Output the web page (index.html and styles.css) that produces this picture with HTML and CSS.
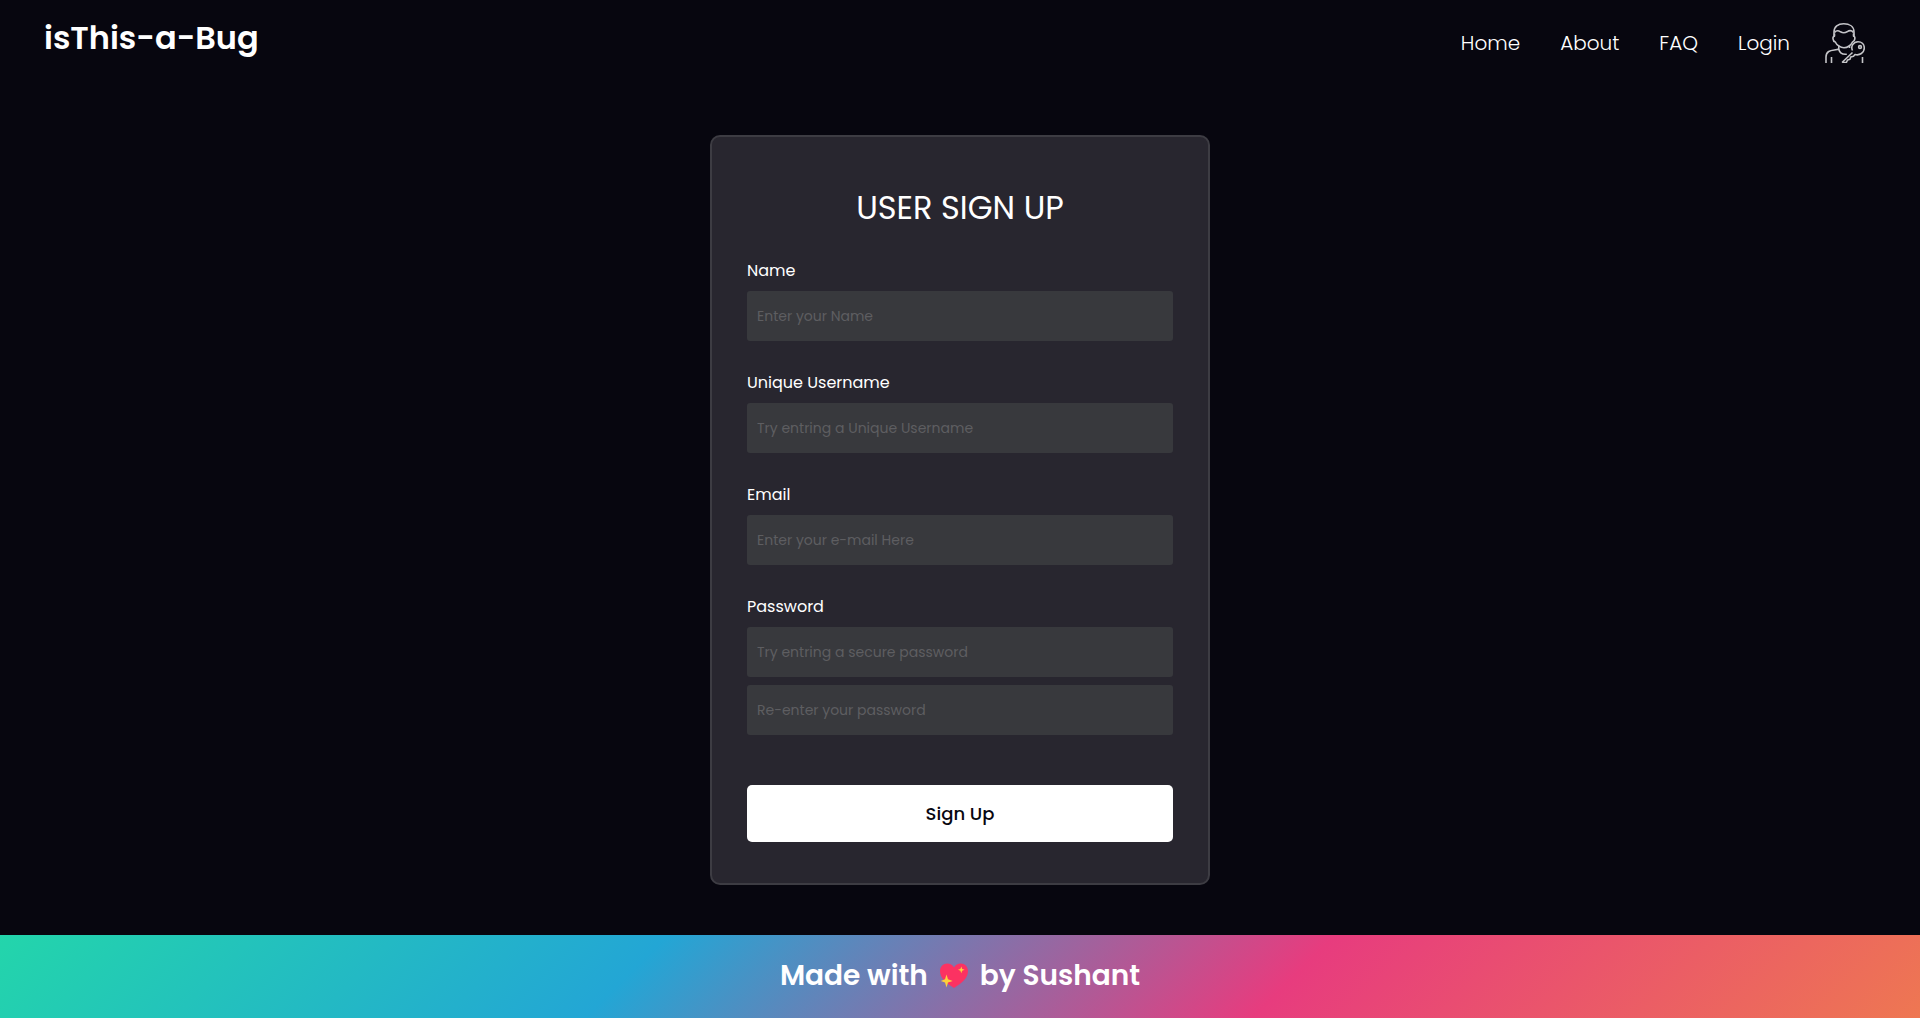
FILE: index.html
```html
<!DOCTYPE html>
<html lang="en">
<head>
<meta charset="utf-8">
<meta name="viewport" content="width=device-width, initial-scale=1">
<title>isThis-a-Bug | Sign Up</title>
<link rel="stylesheet" href="styles.css">
</head>
<body>
<header class="header">
  <a class="logo" href="#">isThis-a-Bug</a>
  <nav class="nav">
    <a href="#">Home</a>
    <a href="#">About</a>
    <a href="#">FAQ</a>
    <a href="#">Login</a>
    <a class="avatar" href="#" aria-label="Account">
      <svg viewBox="0 0 40 40" width="40" height="40" fill="none" stroke="#c4c4c8" stroke-width="1.6" stroke-linejoin="round">
        <path d="M9 14V9C9 3.500 13 .8 18.700 .8S29 3.500 29 9v5"/>
        <path d="M9.500 9.500c2-2.500 4-2 6-.7 2 1.200 4.500 1.200 6.500 0 2-1.300 4.500-1.800 6.500.7"/>
        <path d="M9.500 10.500V13c-2.300.5-2 5.300.8 6 1.200 2.800 5 5.700 8.700 5.700 3.600 0 7.200-2.700 8.500-5.700 2.800-.8 3.100-5.500 1-6v-2.500"/>
        <path d="M13.800 22.500V26C10 28 1 25.500 1 34v6M6.500 34v6M13.800 26.500c1 3.500 4 5.200 8 4.700M24.500 22.500V25M37.500 34v6"/>
        <path d="M27.500 29.500 17.500 39c1.200.8 2.700.8 4 .3l1-2.300 2.500-.7.7-2.300 2.800-.8 1.500-1.700c4.500 1.300 9.300-1.700 9.300-6.500 0-4-3-6.300-6.300-6.300-4.800 0-7.500 5-5.500 8.800"/>
        <circle cx="35" cy="24" r="1.400"/>
      </svg>
    </a>
  </nav>
</header>
<main class="main">
  <form class="card">
    <h1 class="title">USER SIGN UP</h1>
    <div class="field">
      <label for="name">Name</label>
      <input id="name" type="text" placeholder="Enter your Name">
    </div>
    <div class="field">
      <label for="username">Unique Username</label>
      <input id="username" type="text" placeholder="Try entring a Unique Username">
    </div>
    <div class="field">
      <label for="email">Email</label>
      <input id="email" type="email" placeholder="Enter your e-mail Here">
    </div>
    <div class="field">
      <label for="password">Password</label>
      <input id="password" type="password" placeholder="Try entring a secure password">
      <input type="password" aria-label="Repeat password" placeholder="Re-enter your password">
    </div>
    <button class="submit" type="button">Sign Up</button>
  </form>
</main>
<footer class="footer">
  <span>Made with</span>
  <svg class="heart" viewBox="0 0 28 26" width="28" height="26" role="img" aria-label="love">
    <path fill="#fb3262" d="M14 25C6 20 0 15 0 8 0 3.500 3.300.5 7.200.5 10 .5 12.600 2 14 4.500 15.400 2 18 .5 20.800.5 24.700.5 28 3.500 28 8c0 7-6 12-14 17z"/>
    <path fill="#fdd03b" d="M6.500 11.500 8 16.300l4.700 1.600L8 19.500l-1.500 5-1.500-5-4.200-1.600L5 16.300zM21.300 3.500l.9 2.400 2.400.9-2.400.9-.9 2.500-.9-2.500-2.400-.9 2.400-.9z"/>
  </svg>
  <span>by Sushant</span>
</footer>
</body>
</html>
```
FILE: styles.css
```css
* {
  box-sizing: border-box;
}

body {
  display: flex;
  flex-direction: column;
  min-height: 100vh;
  margin: 0;
  background: #07060f;
  color: #fff;
  font-family: Poppins, Inter, sans-serif;
}

.header {
  display: flex;
  justify-content: space-between;
  align-items: flex-start;
  padding: 18px 55px 0 44px;
}

.header a {
  color: inherit;
  text-decoration: none;
}

.logo {
  font-size: 32px;
  font-weight: 600;
  line-height: 40px;
}

.nav {
  display: flex;
  align-items: center;
  gap: 40px;
  padding-top: 5px;
  font-size: 20px;
  font-weight: 300;
  line-height: 40px;
}

.nav .avatar {
  margin-left: -5px;
}

.avatar svg {
  display: block;
}

.main {
  display: flex;
  flex: 1;
  justify-content: center;
  align-items: center;
  padding: 72px 24px 50px;
}

.card {
  display: flex;
  flex-direction: column;
  width: 100%;
  max-width: 500px;
  padding: 50px 35px 41px;
  border: 2px solid #3d3c43;
  border-radius: 10px;
  background: #28262f;
}

.title {
  margin: 0 0 30px;
  font-size: 32px;
  font-weight: 400;
  line-height: 42px;
  text-align: center;
}

.field {
  display: flex;
  flex-direction: column;
  gap: 8px;
  margin-bottom: 30px;
}

.field label {
  font-size: 16px;
  line-height: 24px;
}

.field input {
  width: 100%;
  height: 50px;
  padding: 0 10px;
  border: 0;
  border-radius: 3px;
  background: #38393d;
  color: #fff;
  font-family: inherit;
  font-size: 14px;
  font-weight: 400;
}

.field input::placeholder {
  color: #5e5e61;
}

.submit {
  height: 57px;
  margin-top: 20px;
  border: 0;
  border-radius: 5px;
  background: #fff;
  color: #080710;
  font-family: inherit;
  font-size: 18px;
  font-weight: 500;
}

.footer {
  display: flex;
  justify-content: center;
  align-items: center;
  gap: 12px;
  min-height: 83px;
  padding-bottom: 2px;
  background: linear-gradient(-45deg, #ee7752, #e73c7e, #23a6d5, #23d5ab);
  font-size: 28px;
  font-weight: 600;
}
```
